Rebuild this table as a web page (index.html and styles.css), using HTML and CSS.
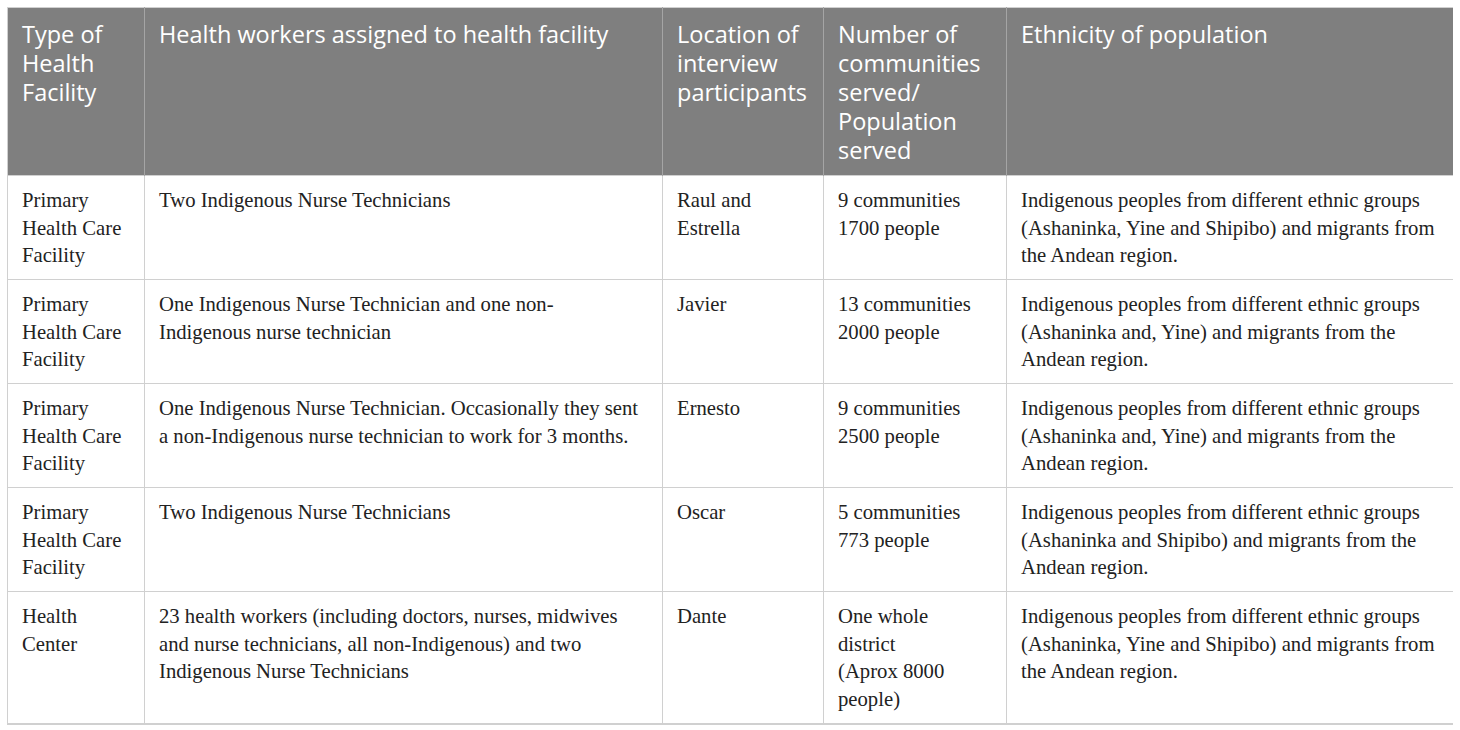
FILE: index.html
```html
<!DOCTYPE html>
<html lang="en">
<head>
    <meta charset="UTF-8">
    <title>Health facilities</title>
    <link rel="stylesheet" href="styles.css">
</head>
<body>
    <table class="facilities">
        <colgroup>
            <col class="c-type">
            <col class="c-workers">
            <col class="c-location">
            <col class="c-number">
            <col class="c-ethnicity">
        </colgroup>
        <thead>
            <tr>
                <th>Type of Health Facility</th>
                <th>Health workers assigned to health facility</th>
                <th>Location of interview participants</th>
                <th>Number of communities served/ Population served</th>
                <th>Ethnicity of population</th>
            </tr>
        </thead>
        <tbody>
            <tr>
                <td>Primary Health Care Facility</td>
                <td class="wide">Two Indigenous Nurse Technicians</td>
                <td>Raul and Estrella</td>
                <td class="wide">9 communities<br>1700 people</td>
                <td>Indigenous peoples from different ethnic groups (Ashaninka, Yine and Shipibo) and migrants from the Andean region.</td>
            </tr>
            <tr>
                <td>Primary Health Care Facility</td>
                <td class="wide">One Indigenous Nurse Technician and one non-Indigenous nurse technician</td>
                <td>Javier</td>
                <td class="wide">13 communities<br>2000 people</td>
                <td>Indigenous peoples from different ethnic groups (Ashaninka and, Yine) and migrants from the Andean region.</td>
            </tr>
            <tr>
                <td>Primary Health Care Facility</td>
                <td class="wide">One Indigenous Nurse Technician. Occasionally they sent a non-Indigenous nurse technician to work for 3 months.</td>
                <td>Ernesto</td>
                <td class="wide">9 communities<br>2500 people</td>
                <td>Indigenous peoples from different ethnic groups (Ashaninka and, Yine) and migrants from the Andean region.</td>
            </tr>
            <tr>
                <td>Primary Health Care Facility</td>
                <td class="wide">Two Indigenous Nurse Technicians</td>
                <td>Oscar</td>
                <td class="wide">5 communities<br>773 people</td>
                <td>Indigenous peoples from different ethnic groups (Ashaninka and Shipibo) and migrants from the Andean region.</td>
            </tr>
            <tr>
                <td>Health Center</td>
                <td class="wide">23 health workers (including doctors, nurses, midwives and nurse technicians, all non-Indigenous) and two Indigenous Nurse Technicians</td>
                <td>Dante</td>
                <td class="wide">One whole district<br>(Aprox 8000 people)</td>
                <td>Indigenous peoples from different ethnic groups (Ashaninka, Yine and Shipibo) and migrants from the Andean region.</td>
            </tr>
        </tbody>
    </table>
</body>
</html>
```

FILE: styles.css
```css
body {
    margin: 7px;
    background: #fff;
}
.facilities {
    width: 1446px;
    table-layout: fixed;
    border-collapse: collapse;
    border: 1px solid #d0d0d0;
}
.c-type { width: 137px; }
.c-workers { width: 518px; }
.c-location { width: 161px; }
.c-number { width: 183px; }
.c-ethnicity { width: 447px; }
th {
    background: #7f7f7f;
    color: #fff;
    font-family: "Open Sans", "Noto Sans", sans-serif;
    font-weight: normal;
    font-size: 23.5px;
    line-height: 29px;
    text-align: left;
    vertical-align: top;
    padding: 12px 10px 10px 14px;
    border-left: 1px solid #a5a5a5;
}
th:first-child {
    border-left: none;
}
td {
    font-family: "Liberation Serif", "Times New Roman", serif;
    font-size: 20.7px;
    line-height: 27.5px;
    color: #222;
    vertical-align: top;
    padding: 11px 10px 9.6px 14px;
    border: 1px solid #d0d0d0;
}
td.wide {
    padding-right: 22px;
}
tbody tr:last-child td {
    border-bottom-width: 2px;
}
```
